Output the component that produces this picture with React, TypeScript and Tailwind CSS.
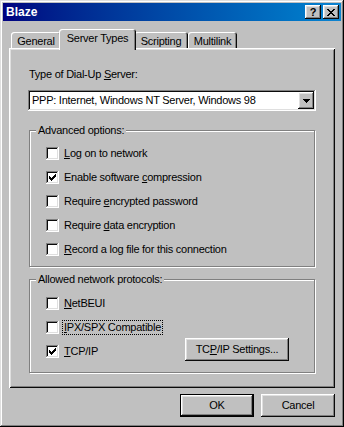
import React from 'react';

// Win98-style bevels
const raised =
  'shadow-[inset_-1px_-1px_#0a0a0a,inset_1px_1px_#ffffff,inset_-2px_-2px_#808080,inset_2px_2px_#dfdfdf]';
const sunken =
  'shadow-[inset_-1px_-1px_#ffffff,inset_1px_1px_#808080,inset_-2px_-2px_#dfdfdf,inset_2px_2px_#0a0a0a]';

function Check({ checked }: { checked?: boolean }) {
  return (
    <span className={`w-[13px] h-[13px] bg-white shrink-0 flex items-center justify-center ${sunken}`}>
      {checked && (
        <svg width="7" height="7" viewBox="0 0 7 7">
          <path
            fillRule="evenodd"
            d="M7 0H6v1H5v1H4v1H3v1H2V3H1V2H0v3h1v1h1v1h1V6h1V5h1V4h1V3h1V0z"
            fill="#000"
          />
        </svg>
      )}
    </span>
  );
}

function Row({ checked, children }: { checked?: boolean; children: React.ReactNode }) {
  return (
    <div className="h-[24px] flex items-center gap-[5px]">
      <Check checked={checked} />
      <span className="leading-[13px] whitespace-nowrap">{children}</span>
    </div>
  );
}

const U = ({ c }: { c: string }) => <span className="underline underline-offset-[1px]">{c}</span>;

function GroupBox({ title, className, children }: { title: string; className?: string; children: React.ReactNode }) {
  return (
    <fieldset
      className={`mx-[1px] border border-[#808080] shadow-[inset_1px_1px_#ffffff,1px_1px_#ffffff] ${className ?? ''}`}
    >
      <legend className="ml-[6px] px-[2px] leading-[13px] bg-[#c0c0c0]">{title}</legend>
      {children}
    </fieldset>
  );
}

export default function App() {
  const tabs = [
    { label: 'General', w: 'w-[50px]' },
    { label: 'Server Types', w: 'w-[77px]', active: true },
    { label: 'Scripting', w: 'w-[54px]' },
    { label: 'Multilink', w: 'w-[49px]' },
  ];

  return (
    <div className="w-[344px] h-[427px] bg-[#c0c0c0] p-[3px] flex flex-col text-[11px] tracking-[-0.25px] text-black font-['Liberation_Sans',Arial,sans-serif] shadow-[inset_-1px_-1px_#000000,inset_1px_1px_#dfdfdf,inset_-2px_-2px_#808080,inset_2px_2px_#ffffff]">
      {/* Title bar */}
      <div className="h-[18px] shrink-0 flex items-center justify-between pl-[3px] pr-[2px] bg-linear-to-r from-[#000080] to-[#1084d0]">
        <span className="text-white font-bold text-[12px] tracking-normal leading-[14px]">Blaze</span>
        <div className="flex gap-[2px]">
          <span className={`w-[16px] h-[14px] bg-[#c0c0c0] flex items-center justify-center font-bold text-[11px] leading-none ${raised}`}>
            ?
          </span>
          <span className={`w-[16px] h-[14px] bg-[#c0c0c0] flex items-center justify-center ${raised}`}>
            <svg width="8" height="7" viewBox="0 0 8 7">
              <path
                fillRule="evenodd"
                d="M0 0h2v1h1v1h2V1h1V0h2v1H7v1H6v1H5v1h1v1h1v1h1v1H6V6H5V5H3v1H2v1H0V6h1V5h1V4h1V3H2V2H1V1H0V0z"
                fill="#000"
              />
            </svg>
          </span>
        </div>
      </div>

      {/* Tabs */}
      <div className="mt-[8px] h-[19px] pl-[8px] flex items-end shrink-0">
        {tabs.map((t) =>
          t.active ? (
            <div
              key={t.label}
              className={`${t.w} h-[21px] -mx-[2px] -mb-[2px] relative z-10 bg-[#c0c0c0] rounded-t-[3px] flex items-start justify-center pt-[3px] leading-[13px] shadow-[inset_1px_1px_#ffffff,inset_-1px_0_#0a0a0a,inset_-2px_0_#808080]`}
            >
              {t.label}
            </div>
          ) : (
            <div
              key={t.label}
              className={`${t.w} h-[16px] bg-[#c0c0c0] rounded-t-[3px] flex items-start justify-center pt-[3px] leading-[13px] shadow-[inset_1px_1px_#ffffff,inset_-1px_0_#0a0a0a,inset_-2px_0_#808080]`}
            >
              {t.label}
            </div>
          )
        )}
      </div>

      {/* Tab panel */}
      <div className="ml-[6px] w-[326px] h-[340px] shrink-0 pt-[20px] px-[19px] flex flex-col shadow-[inset_1px_1px_#ffffff,inset_-1px_-1px_#0a0a0a,inset_2px_2px_#dfdfdf,inset_-2px_-2px_#808080]">
        <div className="leading-[13px] pl-[1px]">
          Type of Dial-Up <U c="S" />erver:
        </div>

        <div className={`mt-[9px] h-[21px] bg-white flex items-center pl-[4px] pr-[2px] ${sunken}`}>
          <span className="flex-1 leading-[13px] whitespace-nowrap">PPP: Internet, Windows NT Server, Windows 98</span>
          <span className={`w-[16px] h-[17px] bg-[#c0c0c0] flex items-center justify-center ${raised}`}>
            <svg width="7" height="4" viewBox="0 0 7 4">
              <path d="M0 0h7v1H6v1H5v1H4v1H3V3H2V2H1V1H0z" fill="#000" />
            </svg>
          </span>
        </div>

        <GroupBox title="Advanced options:" className="mt-[13px]">
          <div className="pt-[4px] pb-[5px] pl-[16px] flex flex-col">
            <Row>
              <U c="L" />og on to network
            </Row>
            <Row checked>
              Enable software <U c="c" />ompression
            </Row>
            <Row>
              Require <U c="e" />ncrypted password
            </Row>
            <Row>
              Require <U c="d" />ata encryption
            </Row>
            <Row>
              <U c="R" />ecord a log file for this connection
            </Row>
          </div>
        </GroupBox>

        <GroupBox title="Allowed network protocols:" className="mt-[6px]">
          <div className="pt-[5px] pb-[9px] pl-[16px] pr-[25px] flex flex-col">
            <Row>
              <U c="N" />etBEUI
            </Row>
            <div className="h-[24px] flex items-center gap-[5px]">
              <Check />
              <span className="leading-[13px] whitespace-nowrap outline-1 outline-dotted outline-black -ml-[1px] px-[1px]">
                <U c="I" />PX/SPX Compatible
              </span>
            </div>
            <div className="h-[24px] flex items-center">
              <div className="flex items-center gap-[5px]">
                <Check checked />
                <span className="leading-[13px]">
                  <U c="T" />CP/IP
                </span>
              </div>
              <button
                className={`ml-auto -mt-[3px] w-[104px] h-[23px] bg-[#c0c0c0] flex items-center justify-center leading-[13px] ${raised}`}
              >
                TC<U c="P" />/IP Settings...
              </button>
            </div>
          </div>
        </GroupBox>
      </div>

      {/* Bottom buttons */}
      <div className="mt-[6px] mr-[6px] flex justify-end gap-[7px]">
        <button
          className={`w-[74px] h-[23px] bg-[#c0c0c0] border border-black flex items-center justify-center leading-[13px] shadow-[inset_-1px_-1px_#0a0a0a,inset_1px_1px_#ffffff,inset_-2px_-2px_#808080,inset_2px_2px_#dfdfdf]`}
        >
          OK
        </button>
        <button className={`w-[74px] h-[23px] bg-[#c0c0c0] flex items-center justify-center leading-[13px] ${raised}`}>
          Cancel
        </button>
      </div>
    </div>
  );
}
